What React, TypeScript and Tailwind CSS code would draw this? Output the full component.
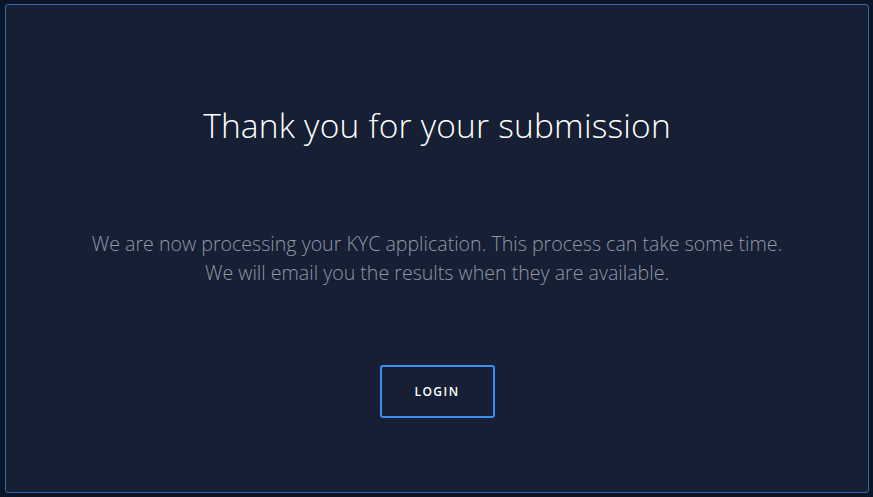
import React from "react";

export default function App() {
  return (
    <div
      className="w-[873px] h-[497px] bg-[#0c1527] pl-[5px] pr-[4px] pt-[4px] pb-[4px] overflow-hidden"
      style={{ fontFamily: '"Open Sans", sans-serif' }}
    >
      <div className="h-[489px] rounded-[3px] border border-[#2f68b0] bg-[#161f33] flex flex-col items-center">
        <h1 className="mt-[97px] text-[33.5px] leading-[46px] font-light text-white tracking-[0.2px]">
          Thank you for your submission
        </h1>
        <div className="mt-[81px] text-center text-[19.6px] leading-[29px] font-light text-[#9097a8]">
          <p>We are now processing your KYC application. This process can take some time.</p>
          <p>We will email you the results when they are available.</p>
        </div>
        <button className="mt-[78px] w-[115px] h-[53px] rounded-[3px] border-2 border-[#3a8ff0] text-white text-[12px] font-semibold tracking-[1.5px]">
          LOGIN
        </button>
      </div>
    </div>
  );
}
